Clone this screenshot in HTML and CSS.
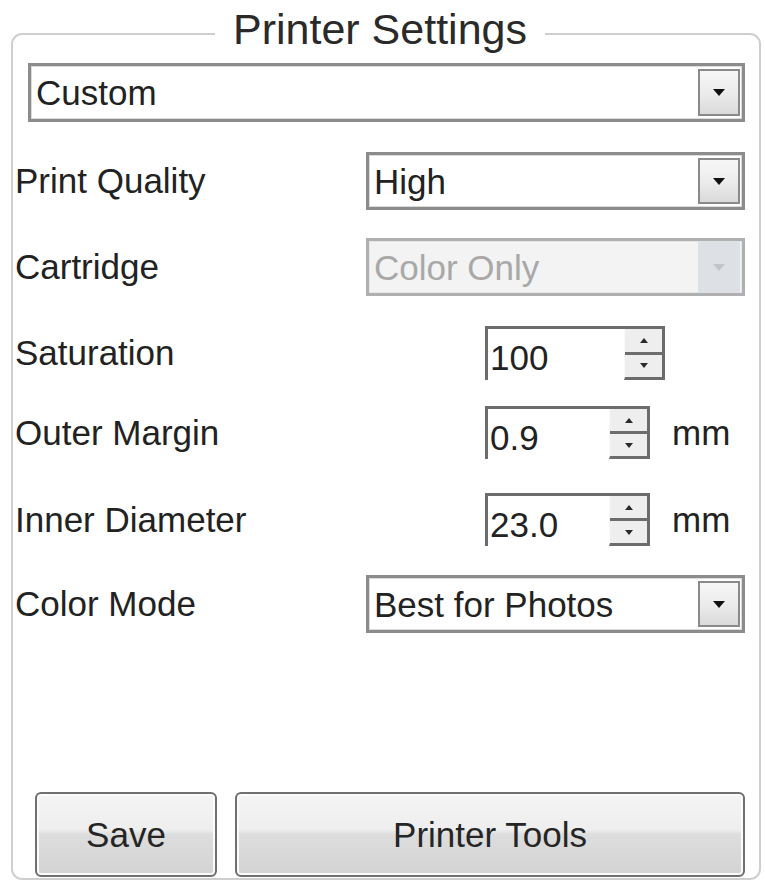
FILE: index.html
```html
<!DOCTYPE html>
<html lang="en">
<head>
<meta charset="utf-8">
<title>Printer Settings</title>
<link rel="stylesheet" href="styles.css">
</head>
<body>
<fieldset class="group">
  <legend class="group-title">Printer Settings</legend>

  <div class="combo combo-preset">
    <span class="combo-text">Custom</span>
    <span class="combo-btn"><svg class="arrow" viewBox="0 0 12 7" width="12" height="7"><polygon points="0,0 12,0 6,7"/></svg></span>
  </div>

  <div class="row row-quality">
    <span class="label">Print Quality</span>
    <div class="combo">
      <span class="combo-text">High</span>
      <span class="combo-btn"><svg class="arrow" viewBox="0 0 12 7" width="12" height="7"><polygon points="0,0 12,0 6,7"/></svg></span>
    </div>
  </div>

  <div class="row row-cartridge">
    <span class="label">Cartridge</span>
    <div class="combo combo-disabled">
      <span class="combo-text">Color Only</span>
      <span class="combo-btn"><svg class="arrow" viewBox="0 0 12 7" width="12" height="7"><polygon points="0,0 12,0 6,7"/></svg></span>
    </div>
  </div>

  <div class="row row-saturation">
    <span class="label">Saturation</span>
    <div class="spin-wrap">
      <div class="spin spin-wide">
        <span class="spin-val">100</span>
        <span class="spin-btns">
          <span class="spin-up"><svg viewBox="0 0 8 5" width="8" height="5"><polygon points="4,0 8,5 0,5"/></svg></span>
          <span class="spin-down"><svg viewBox="0 0 8 5" width="8" height="5"><polygon points="0,0 8,0 4,5"/></svg></span>
        </span>
      </div>
    </div>
  </div>

  <div class="row row-outer">
    <span class="label">Outer Margin</span>
    <div class="spin-wrap">
      <div class="spin">
        <span class="spin-val">0.9</span>
        <span class="spin-btns">
          <span class="spin-up"><svg viewBox="0 0 8 5" width="8" height="5"><polygon points="4,0 8,5 0,5"/></svg></span>
          <span class="spin-down"><svg viewBox="0 0 8 5" width="8" height="5"><polygon points="0,0 8,0 4,5"/></svg></span>
        </span>
      </div>
      <span class="unit">mm</span>
    </div>
  </div>

  <div class="row row-inner">
    <span class="label">Inner Diameter</span>
    <div class="spin-wrap">
      <div class="spin">
        <span class="spin-val">23.0</span>
        <span class="spin-btns">
          <span class="spin-up"><svg viewBox="0 0 8 5" width="8" height="5"><polygon points="4,0 8,5 0,5"/></svg></span>
          <span class="spin-down"><svg viewBox="0 0 8 5" width="8" height="5"><polygon points="0,0 8,0 4,5"/></svg></span>
        </span>
      </div>
      <span class="unit">mm</span>
    </div>
  </div>

  <div class="row row-color">
    <span class="label">Color Mode</span>
    <div class="combo">
      <span class="combo-text">Best for Photos</span>
      <span class="combo-btn"><svg class="arrow" viewBox="0 0 12 7" width="12" height="7"><polygon points="0,0 12,0 6,7"/></svg></span>
    </div>
  </div>

  <div class="actions">
    <button class="btn btn-save" type="button">Save</button>
    <button class="btn btn-tools" type="button">Printer Tools</button>
  </div>
</fieldset>
</body>
</html>
```

FILE: styles.css
```css
html, body {
  margin: 0;
  padding: 0;
  background: #ffffff;
}

body {
  width: 765px;
  height: 885px;
  overflow: hidden;
  font-family: "Liberation Sans", Arial, sans-serif;
  font-size: 35px;
  color: #222222;
}

.group {
  margin: 5px 4px 0 11px;
  padding: 0 14px 1px 2px;
  border: 2px solid #cfcfcf;
  border-radius: 11px;
  min-width: 0;
}

.group-title {
  margin: 0 auto;
  padding: 0 18px 10px;
  font-size: 43px;
  line-height: 48px;
  color: #2a2a2a;
}

/* combo boxes */
.combo {
  display: flex;
  align-items: center;
  height: 58px;
  box-sizing: border-box;
  border: 3px solid #8c8c8c;
  box-shadow: inset 0 0 0 1px #dadada;
  background: #ffffff;
}

.combo-preset {
  height: 59px;
  margin-left: 13px;
}

.combo-text {
  flex: 1;
  padding-left: 5px;
  line-height: 1;
}

.combo-btn {
  width: 42px;
  height: calc(100% - 6px);
  margin-right: 2px;
  box-sizing: border-box;
  border: 2px solid #8a8a8a;
  background: linear-gradient(#f7f7f7, #ececec 50%, #dadada);
  display: flex;
  align-items: center;
  justify-content: center;
}

.arrow {
  fill: #111111;
  display: block;
}

.combo-disabled {
  background: #f3f3f3;
  border-color: #b0b0b0;
  box-shadow: inset 0 0 0 1px #e6e6e6;
  color: #a8a8a8;
}

.combo-disabled .combo-btn {
  height: 100%;
  border: none;
  background: #dde1e6;
}

.combo-disabled .arrow {
  fill: #c2c6cb;
}

/* rows */
.row {
  display: grid;
  grid-template-columns: 351px 1fr;
  align-items: center;
}

.label {
  white-space: nowrap;
}

.row-quality { margin-top: 30px; }
.row-cartridge { margin-top: 28px; }
.row-saturation { margin-top: 30px; }
.row-outer { margin-top: 26px; }
.row-inner { margin-top: 34px; }
.row-color { margin-top: 29px; }

/* spin boxes */
.spin-wrap {
  display: flex;
  align-items: center;
  padding-left: 119px;
}

.spin {
  display: flex;
  width: 165px;
  height: 53px;
  box-sizing: border-box;
  border-top: 3px solid #6c6c6c;
  border-left: 3px solid #6c6c6c;
}

.spin-wide {
  width: 180px;
  height: 54px;
}

.spin-val {
  flex: 1;
  display: flex;
  align-items: center;
  padding: 6px 0 0 2px;
  background: #ffffff;
  line-height: 1;
}

.spin-btns {
  width: 41px;
  display: flex;
  flex-direction: column;
  box-sizing: border-box;
  border-right: 3px solid #6c6c6c;
  border-bottom: 3px solid #6c6c6c;
  border-left: 1px solid #fafafa;
  background: #eeeeee;
}

.spin-up,
.spin-down {
  flex: 1;
  display: flex;
  align-items: center;
  justify-content: center;
  fill: #2a2a2a;
}

.spin-down {
  border-top: 3px solid #6c6c6c;
}

.unit {
  margin-left: 22px;
}

/* buttons */
.actions {
  display: flex;
  gap: 18px;
  margin-top: 159px;
  padding-left: 20px;
}

.btn {
  height: 85px;
  margin: 0;
  padding: 0;
  font: inherit;
  color: #252525;
  border: 2px solid #707070;
  border-radius: 6px;
  background: linear-gradient(#f4f4f4 0%, #eeeeee 44%, #dddddd 50%, #d3d3d3 100%);
  box-shadow: inset 0 0 0 2px #fbfbfb;
}

.btn-save {
  width: 182px;
}

.btn-tools {
  flex: 1;
}
```
